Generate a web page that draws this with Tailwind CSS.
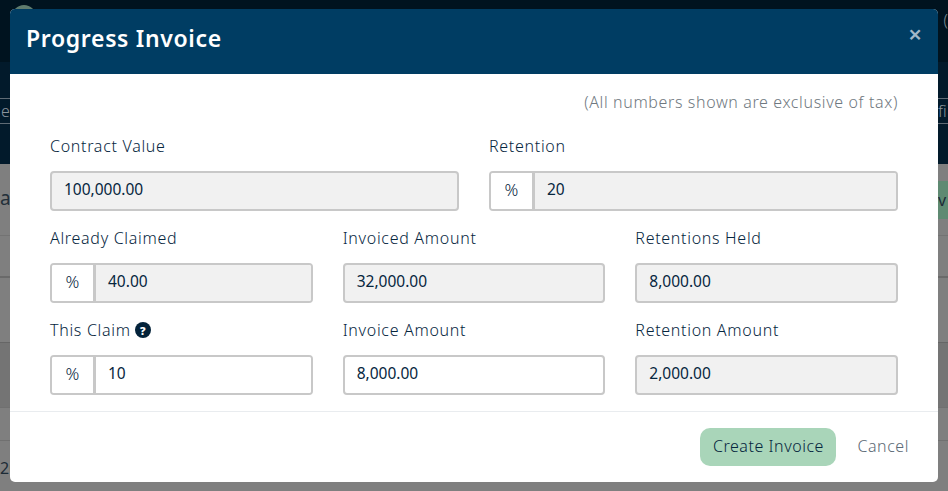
<!DOCTYPE html>
<html lang="en">
<head>
    <meta charset="UTF-8">
    <title>Progress Invoice</title>
    <script src="https://cdn.jsdelivr.net/npm/@tailwindcss/browser@4"></script>
</head>
<body class="relative w-[948px] h-[491px] overflow-hidden bg-[#7f7f7f] font-['Noto_Sans',sans-serif] font-light text-[#06263e]">
    <!-- page behind the backdrop -->
    <div class="absolute inset-x-0 top-0 h-[62px] bg-[#00131f]"></div>
    <div class="absolute inset-x-0 top-[62px] h-[102px] bg-[#021a2b]"></div>
    <div class="absolute left-[12px] top-[5px] h-[24px] w-[24px] rounded-full bg-[#5f7c6e]"></div>
    <div class="absolute right-0 top-[10px] text-[16px] leading-[20px] text-[#7f8c96]">(</div>
    <div class="absolute left-0 top-[98px] h-[26px] w-[10px] border-y border-[#5f6b75]"></div>
    <div class="absolute left-[1px] top-[98px] text-[16px] leading-[26px] text-[#8a949c]">e</div>
    <div class="absolute right-0 top-[98px] h-[26px] w-[10px] border-y border-[#5f6b75] text-[16px] leading-[24px] text-[#8a949c]">fi</div>
    <div class="absolute left-0 top-[184px] text-[19px] font-normal text-[#23303a]">at</div>
    <div class="absolute inset-x-0 top-[235px] border-t border-[#737373]"></div>
    <div class="absolute inset-x-0 top-[276px] border-t-2 border-[#6a6a6a]"></div>
    <div class="absolute inset-x-0 top-[342px] h-[65px] border-t border-[#666] bg-[#747474]"></div>
    <div class="absolute inset-x-0 top-[407px] border-t border-[#707070]"></div>
    <div class="absolute inset-x-0 top-[440px] border-t border-[#707070]"></div>
    <div class="absolute left-0 top-[456px] text-[16px] font-normal text-[#1c2b36]">20</div>
    <div class="absolute left-[930px] right-0 top-[181px] h-[38px] bg-[#5f8a72] pl-[8px] text-[16px] font-normal leading-[38px] text-[#1c2b36]">v</div>

    <div class="absolute left-[10px] top-[9px] flex h-[473px] w-[928px] flex-col overflow-hidden rounded-[5px] bg-white">
        <header class="flex h-[65px] shrink-0 items-start justify-between bg-[#003d63] px-[16px] text-white">
            <h1 class="mt-[13px] text-[23px] font-semibold leading-[32px] tracking-[0.65px]">Progress Invoice</h1>
            <span class="mt-[13px] text-[24px] font-semibold leading-[24px] text-[#a3b8c8]">×</span>
        </header>
        <main class="flex-1 px-[40px]">
            <p class="mt-[16px] text-right text-[16px] leading-[24px] tracking-[0.63px] text-[#6f7880]">(All numbers shown are exclusive of tax)</p>
            <div class="mt-[20px] grid grid-cols-2 gap-x-[30px]">
                <div>
                    <label class="block text-[16px] leading-[24px] tracking-[0.7px]">Contract Value</label>
                    <div class="mt-[13px] flex h-[40px] items-center rounded-[4px] border-2 border-[#c8c8c8] bg-[#f1f1f1] px-[12px] pb-[3px] text-[15.5px] font-normal">100,000.00</div>
                </div>
                <div>
                    <label class="block text-[16px] leading-[24px] tracking-[0.7px]">Retention</label>
                    <div class="mt-[13px] flex h-[40px] overflow-hidden rounded-[4px] border-2 border-[#c8c8c8] text-[15.5px] font-normal">
                        <span class="flex w-[44px] items-center justify-center border-r-[3px] border-[#c8c8c8] bg-white pb-[3px] text-[17px] font-light">%</span>
                        <span class="flex flex-1 items-center bg-[#f1f1f1] px-[12px] pb-[3px]">20</span>
                    </div>
                </div>
            </div>
            <div class="mt-[15px] grid grid-cols-3 gap-x-[30px] gap-y-[15px]">
                <div>
                    <label class="block text-[16px] leading-[24px] tracking-[0.7px]">Already Claimed</label>
                    <div class="mt-[13px] flex h-[40px] overflow-hidden rounded-[4px] border-2 border-[#c8c8c8] text-[15.5px] font-normal">
                        <span class="flex w-[44px] items-center justify-center border-r-[3px] border-[#c8c8c8] bg-white pb-[3px] text-[17px] font-light">%</span>
                        <span class="flex flex-1 items-center bg-[#f1f1f1] px-[12px] pb-[3px]">40.00</span>
                    </div>
                </div>
                <div>
                    <label class="block text-[16px] leading-[24px] tracking-[0.7px]">Invoiced Amount</label>
                    <div class="mt-[13px] flex h-[40px] items-center rounded-[4px] border-2 border-[#c8c8c8] bg-[#f1f1f1] px-[12px] pb-[3px] text-[15.5px] font-normal">32,000.00</div>
                </div>
                <div>
                    <label class="block text-[16px] leading-[24px] tracking-[0.7px]">Retentions Held</label>
                    <div class="mt-[13px] flex h-[40px] items-center rounded-[4px] border-2 border-[#c8c8c8] bg-[#f1f1f1] px-[12px] pb-[3px] text-[15.5px] font-normal">8,000.00</div>
                </div>
                <div>
                    <label class="flex items-center gap-[4px] text-[16px] leading-[24px] tracking-[0.7px]">This Claim
                        <span class="flex h-[16px] w-[16px] items-center justify-center rounded-full bg-[#04233a] text-[11px] font-black leading-none tracking-normal text-white">?</span>
                    </label>
                    <div class="mt-[13px] flex h-[40px] overflow-hidden rounded-[4px] border-2 border-[#c8c8c8] text-[15.5px] font-normal">
                        <span class="flex w-[44px] items-center justify-center border-r-[3px] border-[#c8c8c8] bg-white pb-[3px] text-[17px] font-light">%</span>
                        <span class="flex flex-1 items-center bg-white px-[12px] pb-[3px]">10</span>
                    </div>
                </div>
                <div>
                    <label class="block text-[16px] leading-[24px] tracking-[0.7px]">Invoice Amount</label>
                    <div class="mt-[13px] flex h-[40px] items-center rounded-[4px] border-2 border-[#c8c8c8] bg-white px-[12px] pb-[3px] text-[15.5px] font-normal">8,000.00</div>
                </div>
                <div>
                    <label class="block text-[16px] leading-[24px] tracking-[0.7px]">Retention Amount</label>
                    <div class="mt-[13px] flex h-[40px] items-center rounded-[4px] border-2 border-[#c8c8c8] bg-[#f1f1f1] px-[12px] pb-[3px] text-[15.5px] font-normal">2,000.00</div>
                </div>
            </div>
        </main>
        <footer class="flex h-[71px] shrink-0 items-center justify-end gap-[21px] border-t border-[#e9ecef] pr-[29px] text-[16px] tracking-[0.55px]">
            <button class="h-[38px] w-[136px] rounded-[10px] bg-[#a9d5b9] pb-[2px]">Create Invoice</button>
            <button class="pb-[2px] text-[#5c6a76]">Cancel</button>
        </footer>
    </div>
</body>
</html>
